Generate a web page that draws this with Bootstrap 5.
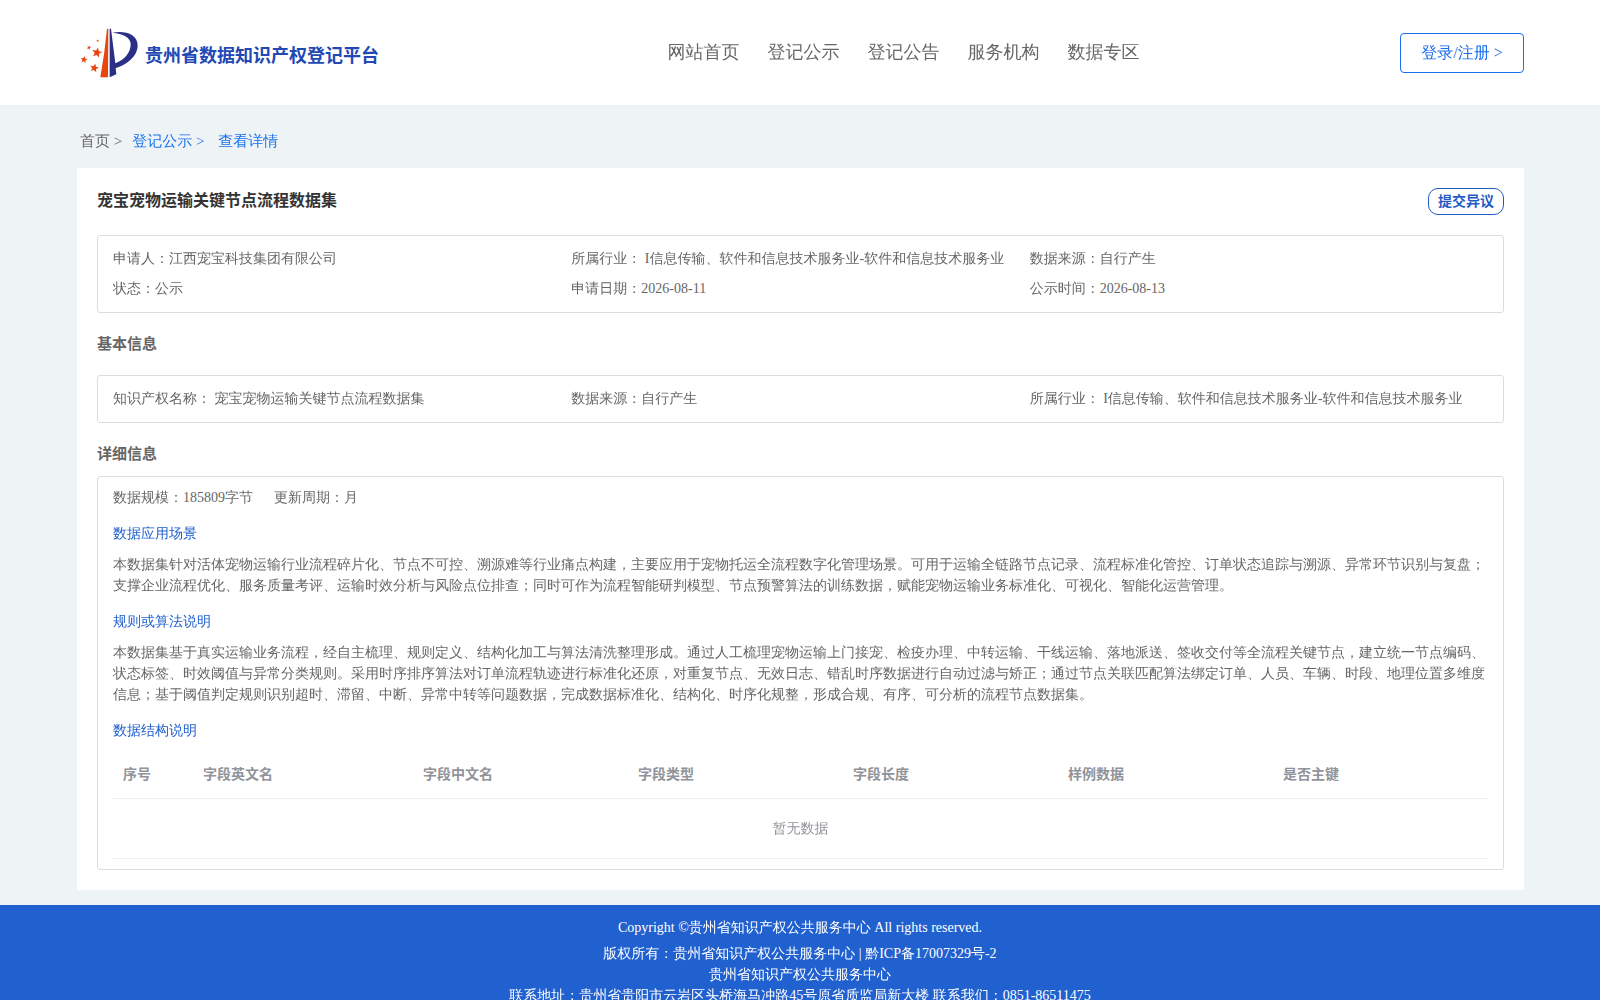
<!DOCTYPE html>
<html lang="zh-CN">
<head>
<meta charset="utf-8">
<meta name="viewport" content="width=device-width, initial-scale=1">
<title>贵州省数据知识产权登记平台</title>
<link href="https://cdn.jsdelivr.net/npm/bootstrap@5.3.0/dist/css/bootstrap.min.css" rel="stylesheet">
<style>
  body { font-family: "Liberation Serif", "WenQuanYi Zen Hei", "WenQuanYi Micro Hei", "Droid Sans Fallback", "Noto Sans CJK SC", serif; font-size: 14px; line-height: 21px; color: #666; background: #eef3f6; }
  .brand, .panel h1, .panel h2, .fields th, .btn-objection { font-family: "Liberation Serif", "Noto Sans CJK SC", serif; }
  a { text-decoration: none; }
  .page-gutter { padding-left: 77px; padding-right: 76px; }
  .site-header { min-height: 105px; }
  .brand { color: #2148b4; font-size: 18px; font-weight: 700; line-height: 24px; gap: 7px; padding-left: 3px; }
  .brand-name { padding-top: 6px; }
  .main-nav { gap: 28px; padding: 0 0 2px 28px; font-size: 18px; line-height: 24px; }
  .main-nav a { color: #666; }
  .btn-login { --bs-btn-color: #1a6eeb; --bs-btn-border-color: #1a6eeb; --bs-btn-hover-bg: #1a6eeb; --bs-btn-hover-color: #fff; --bs-btn-padding-x: 20px; --bs-btn-padding-y: 7px; --bs-btn-font-size: 16px; --bs-btn-border-radius: 4px; --bs-btn-line-height: 24px; min-width: 124px; }
  .crumbs { padding: 24px 3px 15px; gap: 10px; font-size: 15px; line-height: 24px; }
  .crumbs a { color: #666; }
  .crumbs .current { color: #1a73ee; }
  .panel { padding: 20px; }
  .panel-head { margin-bottom: 20px; }
  .panel h1 { font-size: 16px; line-height: 26px; font-weight: 700; color: #333; }
  .btn-objection { --bs-btn-color: #1f5cc4; --bs-btn-border-color: #1f5cc4; --bs-btn-hover-bg: #1f5cc4; --bs-btn-hover-color: #fff; --bs-btn-padding-x: 9px; --bs-btn-padding-y: 2px; --bs-btn-font-size: 14px; --bs-btn-font-weight: 700; --bs-btn-border-radius: 10px; --bs-btn-line-height: 21px; }
  .panel h2 { font-size: 15px; line-height: 22px; font-weight: 700; margin: 20px 0; }
  .panel h2.tight { margin-bottom: 11px; }
  .info-box { border: 1px solid #ddd; border-radius: 3px; padding: 8px 15px; line-height: 30px; }
  .detail-box { padding: 10px 15px; line-height: 21px; }
  .detail-box h3 { font-size: 14px; line-height: 21px; font-weight: 400; color: #2060d0; margin: 15px 0 10px; }
  .facts { gap: 21px; }
  .fields { --bs-table-bg: transparent; table-layout: fixed; color: #909399; }
  .fields th, .fields td { border-color: #ebeef5; color: #909399; vertical-align: middle; padding: 0 10px; }
  .fields th { height: 47px; }
  .fields td { height: 60px; }
  .site-footer { background: #2160cf; margin-top: 15px; padding: 12px 0 15px; }
  .site-footer p { margin-bottom: 5px; }
</style>
<script src="https://cdn.jsdelivr.net/npm/bootstrap@5.3.0/dist/js/bootstrap.bundle.min.js"></script>
</head>
<body>
<header class="site-header page-gutter bg-white d-flex align-items-center">
  <a class="brand d-flex align-items-center" href="#">
    <svg width="58" height="51" viewBox="30 36 174 153" aria-hidden="true">
      <defs><path id="star" d="M0-10 2.6-3.4 9.5-3.1 4.1 1.3 5.9 8.1 0 4.3-5.9 8.1-4.1 1.3-9.5-3.1-2.6-3.4Z"/></defs>
      <path fill="#e8450f" d="M111 41h4l-1 146H91Q104 115 111 41Z"/>
      <path fill="#2b2f86" d="M119 41h4l13 104C164 135 182 112 182 88 182 66 158 56 127 53 166 46 203 58 203 91 203 126 166 152 137 159l2 19-20 9Z"/>
      <g fill="#e8450f">
        <use href="#star" transform="translate(81 113) rotate(12) scale(1.6)"/>
        <use href="#star" transform="translate(42 134) rotate(8) scale(1.1)"/>
        <use href="#star" transform="translate(73 159) rotate(12) scale(1.4)"/>
        <use href="#star" transform="translate(57 98) rotate(20) scale(.7)"/>
        <use href="#star" transform="translate(83 77) scale(.45)"/>
      </g>
    </svg>
    <span class="brand-name">贵州省数据知识产权登记平台</span>
  </a>
  <nav class="main-nav d-flex mx-auto" aria-label="主导航">
    <a href="#">网站首页</a>
    <a href="#">登记公示</a>
    <a href="#">登记公告</a>
    <a href="#">服务机构</a>
    <a href="#">数据专区</a>
  </nav>
  <button type="button" class="btn btn-login">登录/注册 &gt;</button>
</header>

<main class="page-gutter">
  <nav class="crumbs d-flex" aria-label="面包屑">
    <a href="#">首页 &gt;</a>
    <a class="current" href="#">登记公示 &gt;&nbsp;</a>
    <a class="current" href="#" aria-current="page">查看详情</a>
  </nav>

  <div class="panel bg-white">
    <div class="panel-head d-flex justify-content-between align-items-start">
      <h1 class="mb-0">宠宝宠物运输关键节点流程数据集</h1>
      <button type="button" class="btn btn-objection">提交异议</button>
    </div>

    <div class="info-box">
      <div class="row g-0">
        <div class="col-4">申请人：江西宠宝科技集团有限公司</div>
        <div class="col-4">所属行业： I信息传输、软件和信息技术服务业-软件和信息技术服务业</div>
        <div class="col-4">数据来源：自行产生</div>
        <div class="col-4">状态：公示</div>
        <div class="col-4">申请日期：2026-08-11</div>
        <div class="col-4">公示时间：2026-08-13</div>
      </div>
    </div>

    <h2>基本信息</h2>
    <div class="info-box">
      <div class="row g-0">
        <div class="col-4">知识产权名称： 宠宝宠物运输关键节点流程数据集</div>
        <div class="col-4">数据来源：自行产生</div>
        <div class="col-4">所属行业： I信息传输、软件和信息技术服务业-软件和信息技术服务业</div>
      </div>
    </div>

    <h2 class="tight">详细信息</h2>
    <div class="info-box detail-box">
      <div class="facts d-flex"><span>数据规模：185809字节</span><span>更新周期：月</span></div>
      <h3>数据应用场景</h3>
      <p class="mb-0">本数据集针对活体宠物运输行业流程碎片化、节点不可控、溯源难等行业痛点构建，主要应用于宠物托运全流程数字化管理场景。可用于运输全链路节点记录、流程标准化管控、订单状态追踪与溯源、异常环节识别与复盘；支撑企业流程优化、服务质量考评、运输时效分析与风险点位排查；同时可作为流程智能研判模型、节点预警算法的训练数据，赋能宠物运输业务标准化、可视化、智能化运营管理。</p>
      <h3>规则或算法说明</h3>
      <p class="mb-0">本数据集基于真实运输业务流程，经自主梳理、规则定义、结构化加工与算法清洗整理形成。通过人工梳理宠物运输上门接宠、检疫办理、中转运输、干线运输、落地派送、签收交付等全流程关键节点，建立统一节点编码、状态标签、时效阈值与异常分类规则。采用时序排序算法对订单流程轨迹进行标准化还原，对重复节点、无效日志、错乱时序数据进行自动过滤与矫正；通过节点关联匹配算法绑定订单、人员、车辆、时段、地理位置多维度信息；基于阈值判定规则识别超时、滞留、中断、异常中转等问题数据，完成数据标准化、结构化、时序化规整，形成合规、有序、可分析的流程节点数据集。</p>
      <h3>数据结构说明</h3>
      <table class="table fields mb-0">
        <colgroup><col width="80"><col width="220"><col><col><col><col><col></colgroup>
        <thead>
          <tr><th scope="col">序号</th><th scope="col">字段英文名</th><th scope="col">字段中文名</th><th scope="col">字段类型</th><th scope="col">字段长度</th><th scope="col">样例数据</th><th scope="col">是否主键</th></tr>
        </thead>
        <tbody>
          <tr><td class="text-center" colspan="7">暂无数据</td></tr>
        </tbody>
      </table>
    </div>
  </div>
</main>

<footer class="site-footer text-white text-center">
  <p>Copyright ©贵州省知识产权公共服务中心 All rights reserved.</p>
  <div>版权所有：贵州省知识产权公共服务中心 | 黔ICP备17007329号-2</div>
  <div>贵州省知识产权公共服务中心</div>
  <div>联系地址：贵州省贵阳市云岩区头桥海马冲路45号原省质监局新大楼 联系我们：0851-86511475</div>
</footer>
</body>
</html>
